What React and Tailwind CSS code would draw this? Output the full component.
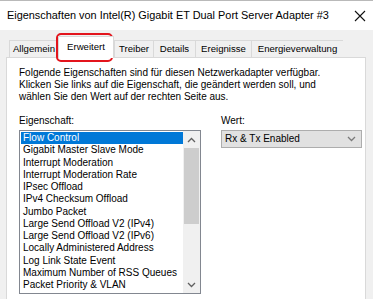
const items = [
  'Flow Control',
  'Gigabit Master Slave Mode',
  'Interrupt Moderation',
  'Interrupt Moderation Rate',
  'IPsec Offload',
  'IPv4 Checksum Offload',
  'Jumbo Packet',
  'Large Send Offload V2 (IPv4)',
  'Large Send Offload V2 (IPv6)',
  'Locally Administered Address',
  'Log Link State Event',
  'Maximum Number of RSS Queues',
  'Packet Priority & VLAN',
];

const tabs = [
  { label: 'Allgemein', w: 'w-[49px]' },
  { label: 'Erweitert', w: 'w-[56px]', active: true },
  { label: 'Treiber', w: 'w-[39px]' },
  { label: 'Details', w: 'w-[42px]' },
  { label: 'Ereignisse', w: 'w-[56px]' },
  { label: 'Energieverwaltung', w: 'w-[92px]' },
];

function Chevron({ up, className }) {
  return (
    <svg width="9" height="6" viewBox="0 0 9 6" className={className}>
      <polyline
        points={up ? '1,5 4.5,1.5 8,5' : '1,1 4.5,4.5 8,1'}
        fill="none"
        stroke="currentColor"
        strokeWidth="1.3"
      />
    </svg>
  );
}

export default function App() {
  return (
    <div className="relative h-[299px] w-[373px] overflow-hidden border-t border-[#b9b9b9] bg-[#f0f0f0] font-['Liberation_Sans',sans-serif] text-black">
      {/* title bar */}
      <div className="flex h-[29px] items-center justify-between bg-white pl-[7px] pr-[6px]">
        <span className="whitespace-nowrap text-[10.9px]">
          Eigenschaften von Intel(R) Gigabit ET Dual Port Server Adapter #3
        </span>
        <svg width="12" height="12" viewBox="0 0 12 12" className="mr-[1px] shrink-0">
          <path d="M1 1L11 11M11 1L1 11" stroke="#111" strokeWidth="1.1" />
        </svg>
      </div>

      {/* tabs */}
      <div className="relative flex h-[27px] items-end pl-[9px]">
        {tabs.map((t) =>
          t.active ? (
            <div
              key={t.label}
              className={`${t.w} relative z-10 -mb-px flex h-[22px] items-center justify-center border border-b-0 border-[#d9d9d9] bg-white text-[9.6px]`}
            >
              {t.label}
            </div>
          ) : (
            <div
              key={t.label}
              className={`${t.w} flex h-[17px] items-center justify-center border border-r-0 border-b-0 border-[#d9d9d9] text-[9.6px] last:border-r`}
            >
              {t.label}
            </div>
          )
        )}
        <div className="absolute left-[56px] top-[3px] h-[29px] w-[57px] rounded-[5px] border-2 border-[#e3141c]" />
      </div>

      {/* panel */}
      <div className="ml-[6px] h-[243px] w-[360px] border border-b-0 border-[#d9d9d9] bg-white pl-[12px] pt-[9px] text-[10px] leading-[12px]">
        <p>Folgende Eigenschaften sind für diesen Netzwerkadapter verfügbar.</p>
        <p>Klicken Sie links auf die Eigenschaft, die geändert werden soll, und</p>
        <p>wählen Sie den Wert auf der rechten Seite aus.</p>

        <div className="mt-[12px] flex gap-[20px]">
          <div>
            <p className="mb-[3px]">Eigenschaft:</p>
            <div className="flex h-[164px] w-[182px] border border-[#828790]">
              <div className="flex-1 pl-px pt-px">
                {items.map((it, i) => (
                  <div
                    key={it}
                    className={`flex h-[12.25px] items-center pl-[2px] ${i === 0 ? 'bg-[#0078d7] text-white' : ''}`}
                  >
                    {it}
                  </div>
                ))}
              </div>
              <div className="flex w-[17px] flex-col bg-[#f0f0f0]">
                <div className="flex h-[17px] items-center justify-center text-[#606060]">
                  <Chevron up />
                </div>
                <div className="mx-[1px] h-[76px] bg-[#cdcdcd]" />
                <div className="flex-1" />
                <div className="flex h-[17px] items-center justify-center text-[#606060]">
                  <Chevron />
                </div>
              </div>
            </div>
          </div>

          <div>
            <p className="mb-[3px]">Wert:</p>
            <div className="flex h-[18px] w-[141px] items-center justify-between border border-[#adadad] bg-[#e1e1e1] pl-[3px] pr-[5px]">
              <span>Rx &amp; Tx Enabled</span>
              <Chevron className="text-[#7a7a7a]" />
            </div>
          </div>
        </div>
      </div>
    </div>
  );
}
